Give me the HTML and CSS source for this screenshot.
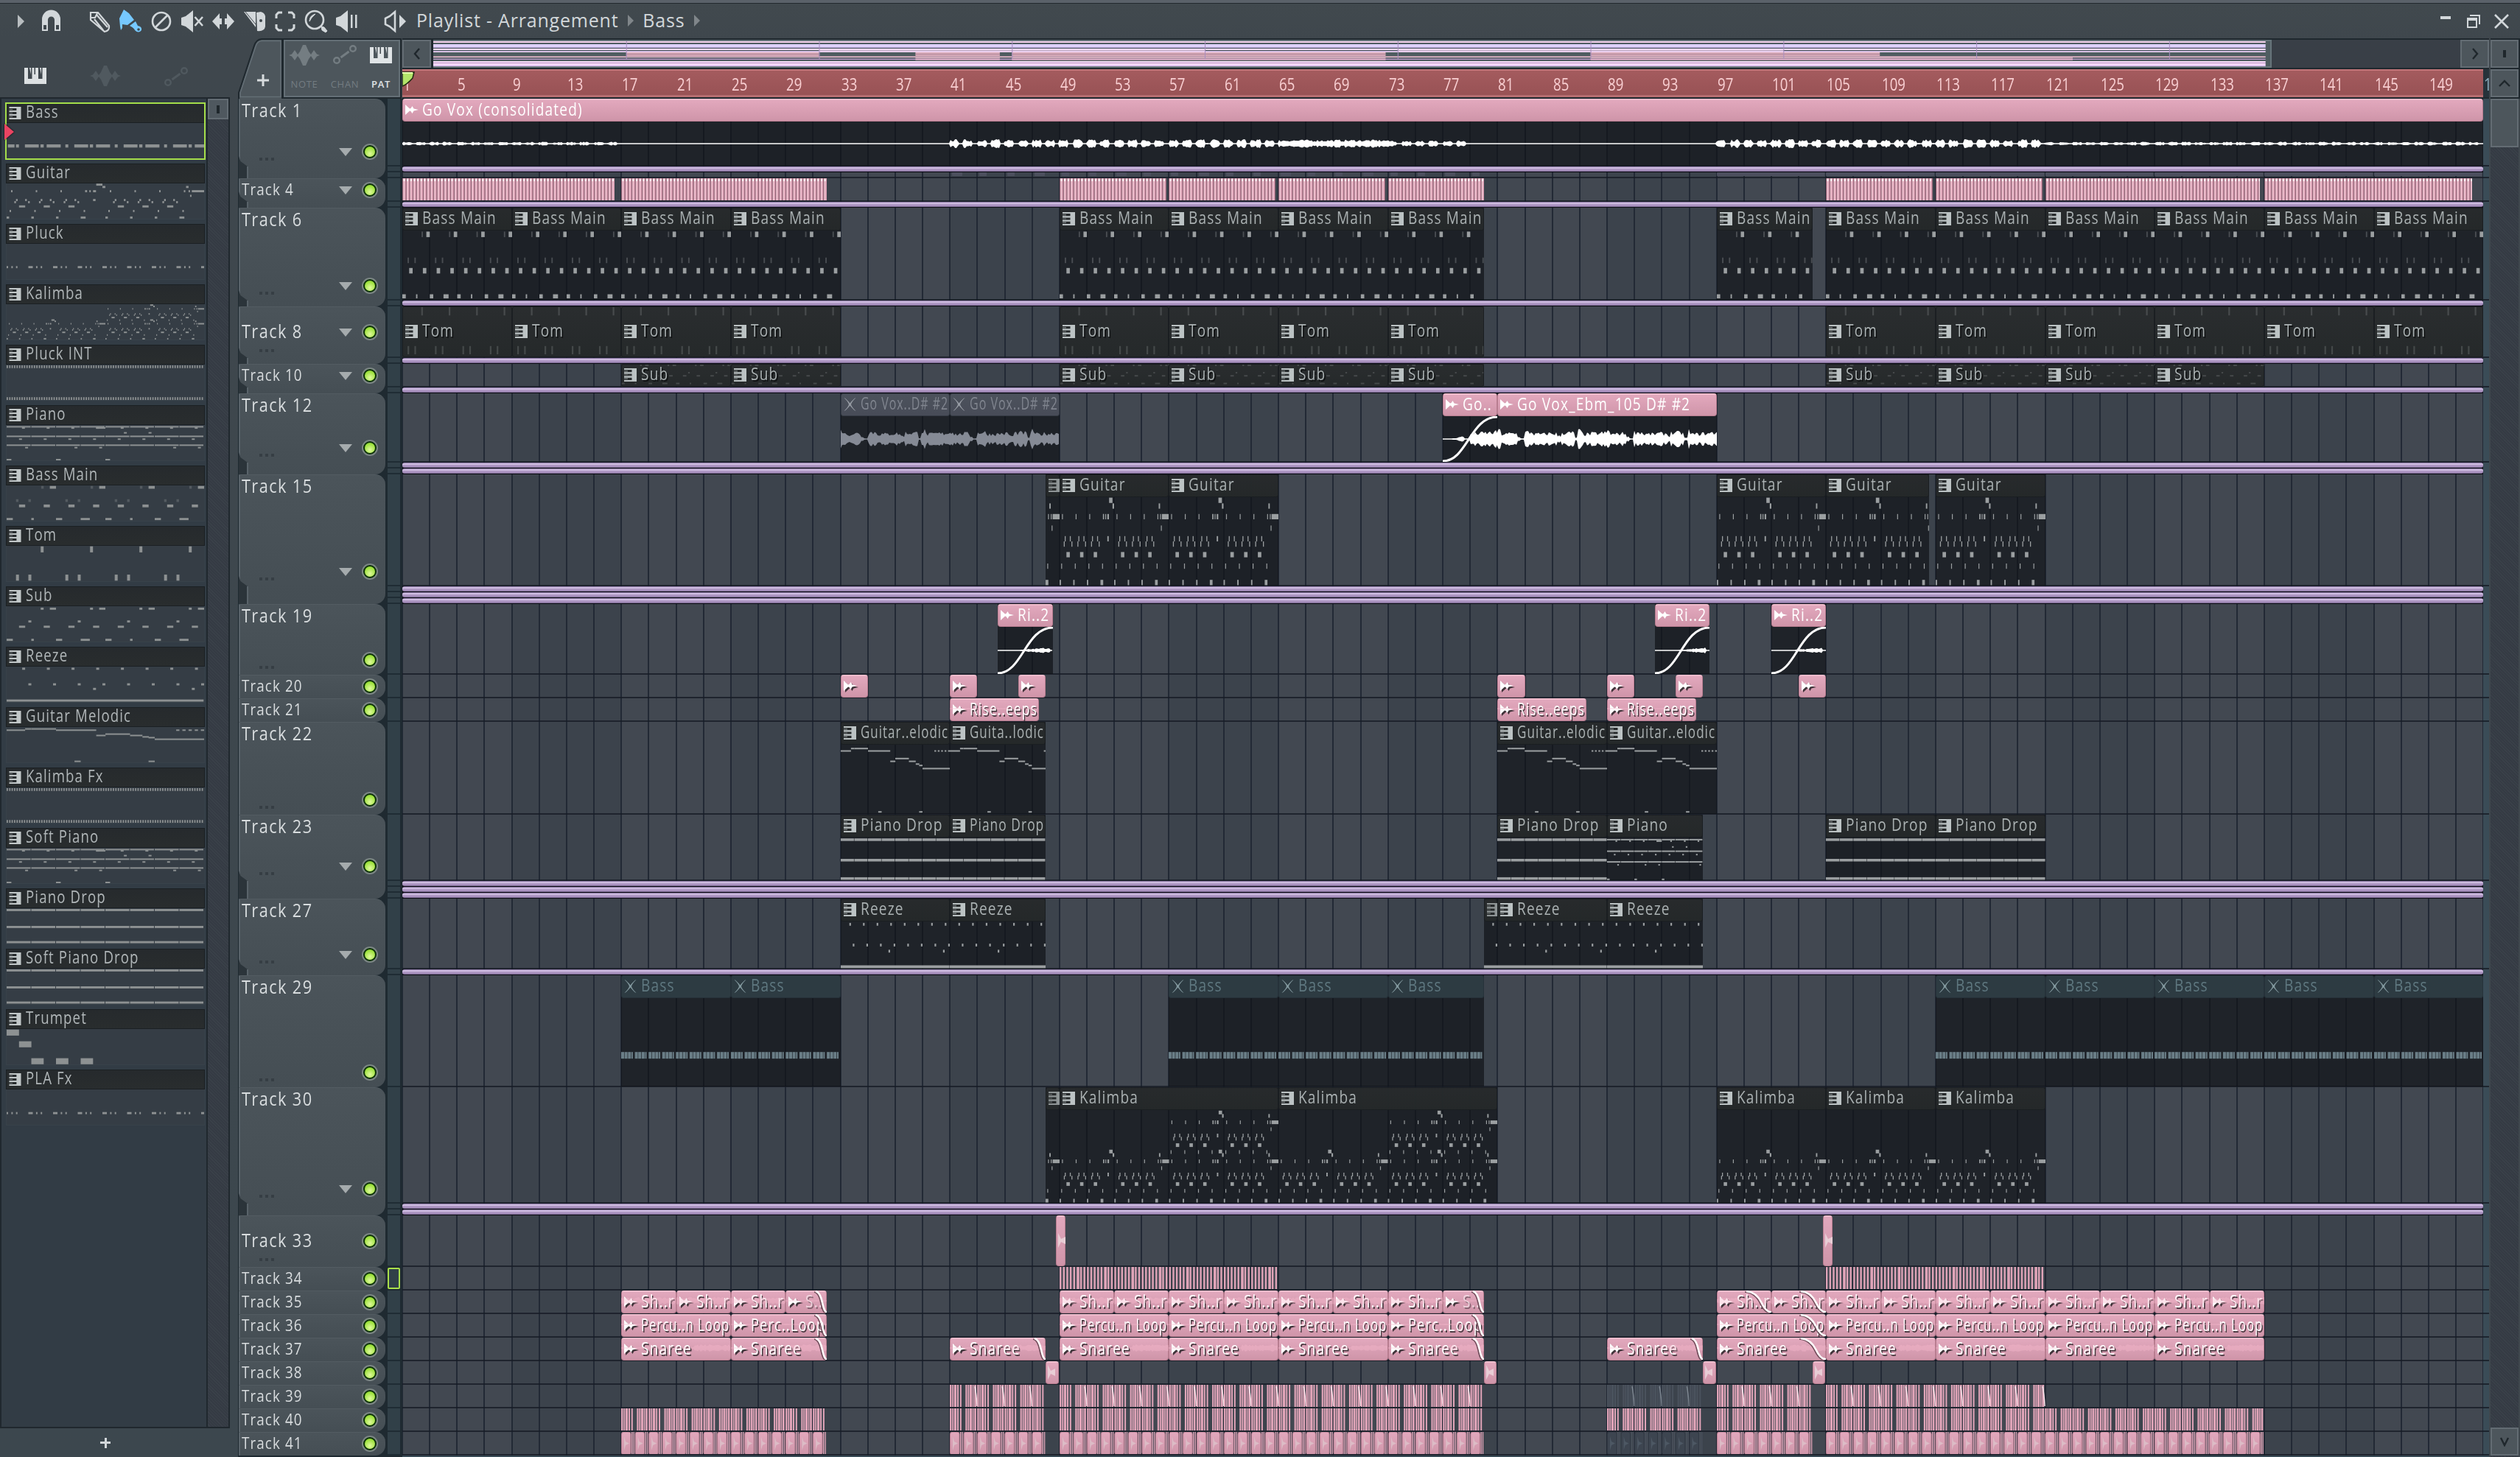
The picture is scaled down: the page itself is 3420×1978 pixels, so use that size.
FILE: index.html
```html
<!DOCTYPE html>
<html lang="en">
<head>
<meta charset="utf-8">
<title>Playlist - Arrangement</title>
<link rel="stylesheet" href="styles.css">
</head>
<body>
<svg class="defs" width="0" height="0">
  <symbol id="i-pattern" viewBox="0 0 17 18"><path d="M0 0H17V18H0V16H10.500V12.800H0V10.500H10.500V7.500H0V5.200H10.500V2H0z"/><path d="M0 3.600H5V4.300H0zM0 8.700H5V9.300H0zM0 13.800H5V14.400H0z"/></symbol>
  <symbol id="i-audio" viewBox="0 0 18 16"><path d="M0 1L6 6.500L7.500 6L9.500 3L11.500 6.500L18 8L11.500 9.500L9.500 13L7.500 10L6 9.500L0 15z"/></symbol>
  <symbol id="i-mute" viewBox="0 0 16 18"><path d="M0 0Q3 1 8 7.500Q13 1 16 0Q10 6 9.500 9Q10 12 16 18Q13 17 8 10.500Q3 17 0 18Q6 12 6.500 9Q6 6 0 0z"/></symbol>
  <symbol id="i-piano" viewBox="0 0 30 22"><path d="M0 0H5V15H10.500V0H19V15H24.500V0H30V22H0zM7 0H9V9zM21 0H23V9z"/><path d="M13.500 0H15V9H13.500z" fill="#3f474d"/></symbol>
  <symbol id="i-wave" viewBox="0 0 42 28"><path d="M0 14L4 12.500L8 7L12 13L15 9L19 0H23L27 9L30 13L34 7L38 12.500L42 14L38 15.500L34 21L30 15L27 19L23 28H19L15 19L12 15L8 21L4 15.500z"/></symbol>
  <symbol id="i-auto" viewBox="0 0 32 26"><g fill="none" stroke="currentColor" stroke-width="2.400"><circle cx="5" cy="21" r="3.800"/><circle cx="27" cy="5" r="3.800"/><path d="M10.500 17L21.500 9" stroke-width="3"/></g></symbol>
</svg>
<div class="window">
  <header class="toolbar">
    <svg class="tools" width="560" height="47" viewBox="0 5 560 47" fill="#d2d7da">
      <path d="M24 20L33 29L24 38z" fill="#b8bdc0"/>
      <path d="M57 42V26a12 12 0 0 1 25 0V42H74V27a4.500 4.500 0 0 0 -9 0V42zM59 34H63V40H59zM76 34H80V40H76z" fill-rule="evenodd"/>
      <g fill="none" stroke="#d2d7da" stroke-width="2.200"><path d="M123 17L133 17L148 35Q149 42 142 43L123 27zM128 26L140 41M131 20L146 37M123 24L129 24L132 18"/></g>
      <path d="M162 25L168 13L175 18L182 27L173 34L166 33V38L164 41L163 36zM176 35L184 29L187 35Q193 36 192 41Q188 46 183 41Q182 38 176 35z" fill="#76c8ff"/><circle cx="188" cy="40" r="1.800" fill="#3f474d"/>
      <g fill="none" stroke="#d2d7da" stroke-width="2.600"><circle cx="219" cy="29" r="12"/><path d="M211 37L227 21"/></g>
      <path d="M246 24L252 22L262 14V44L252 36L246 34z"/><path d="M264.500 23L275 35M275 23L264.500 35" stroke="#d2d7da" stroke-width="2.600"/>
      <path d="M288 29L298 18V25H301V33H298V40zM318 29L308 18V25H305V33H308V40z"/>
      <path d="M331 16L347 37V16zM348 17L354 16Q361 18 360 25V36Q359 43 349 42z"/><path d="M333 16L347 33" stroke="#3f474d"/><circle cx="354" cy="28" r="2" fill="#3f474d"/>
      <path d="M375 25V20L378 17H383M391 17H396L399 20V25M399 33V38L396 41H391M383 41H378L375 38V33" fill="none" stroke="#d2d7da" stroke-width="3"/>
      <circle cx="427" cy="27" r="12" fill="none" stroke="#d2d7da" stroke-width="2.600"/><path d="M420 29Q420 21 428 19Q422 24 420 29M436 36L440 37L444 42L442 44L437 41z" stroke="#d2d7da" stroke-width="1"/>
      <path d="M456 24L462 22L472 14V44L462 36L456 34zM476 20H478.500V38H476zM482 20H484.500V38H482z"/>
      <path d="M523 25L529 22L536 16V42L529 36L523 33z" fill="none" stroke="#d2d7da" stroke-width="2.600"/><path d="M542 20L551 29L542 38z"/>
    </svg>
    <nav class="crumbs"><span>Playlist - Arrangement</span><i></i><span>Bass</span><i></i></nav>
    <svg class="winbtns" width="100" height="24" viewBox="0 0 100 24" fill="#d2d7da"><path d="M2 4H16V8H2z"/><path d="M39 7H51V19H39z" fill="none" stroke="#d2d7da" stroke-width="2"/><path d="M38 6H52V10H38zM42 2H56V15H54V4H42z"/><path d="M76 2L94 20M94 2L76 20" stroke="#d2d7da" stroke-width="2.600"/></svg>
  </header>
  <div class="main">
    <aside class="picker">
      <div class="picker-tabs">
        <svg class="on" width="30" height="22"><use href="#i-piano"/></svg>
        <svg width="42" height="28"><use href="#i-wave"/></svg>
        <svg width="32" height="26"><use href="#i-auto"/></svg>
      </div>
      <div class="picker-body">
        <div class="picker-list" id="picker"></div>
        <div class="picker-scroll"><div class="knob"></div></div>
      </div>
      <button class="picker-add" aria-label="Add pattern"><b></b></button>
    </aside>
    <section class="playlist">
      <div class="corner">
        <svg width="61" height="82" viewBox="0 0 61 82"><path d="M1 82V74L22 10Q25 2 32 2H60V82z" fill="#4d565c"/><path d="M1 82V74L22 10Q25 1.500 32 1H60V82" fill="none" stroke="#1f282e" stroke-width="2"/><path d="M3 79.500V74L24 11Q26 4 32 3.500H58V79.500z" fill="none" stroke="#646f76" stroke-width="1.500"/><path d="M32.500 49H35.500V55.500H42V58.500H35.500V65H32.500V58.500H26V55.500H32.500z" fill="#d8dcde"/></svg>
        <div class="modes">
          <div><svg width="42" height="28"><use href="#i-wave"/></svg><span>NOTE</span></div>
          <div><svg width="32" height="26"><use href="#i-auto"/></svg><span>CHAN</span></div>
          <div class="on"><svg width="30" height="22"><use href="#i-piano"/></svg><span>PAT</span></div>
        </div>
      </div>
      <div class="top">
        <div class="mapbar">
          <div class="btn"><svg width="12" height="18"><path d="M9 2L3 9L9 16" fill="none" stroke="#1f272c" stroke-width="2.400"/></svg></div>
          <div class="map"><svg id="map" width="2495" height="38"></svg></div>
          <div class="btn"><svg width="12" height="18"><path d="M3 2L9 9L3 16" fill="none" stroke="#1f272c" stroke-width="2.400"/></svg></div>
        </div>
        <div class="ruler" id="ruler"></div>
      </div>
      <div class="side-top"><div class="btn"><em></em></div><div class="btn"><svg width="18" height="12"><path d="M2 10L9 3L16 10" fill="none" stroke="#1f272c" stroke-width="2.400"/></svg></div></div>
      <div class="heads" id="heads"></div>
      <div class="grid" id="grid"></div>
      <div class="vscroll"><div class="thumb"></div><div class="btn"><svg width="18" height="14"><path d="M4 2L9 12L14 2" fill="none" stroke="#1f272c" stroke-width="2.400"/></svg></div></div>
    </section>
  </div>
</div>
<script src="playlist.js"></script>
</body>
</html>
```
FILE: styles.css
```css
* { box-sizing: border-box; }
body { margin: 0; background: #3f474d; font-family: "Liberation Sans Narrow", "Open Sans", sans-serif; color: #d2d7da; overflow: hidden; }
.defs { position: absolute; }
svg { display: block; flex: none; }
button { border: 0; padding: 0; font: inherit; }
.window { width: 3420px; height: 1978px; display: flex; flex-direction: column; border-top: 4px solid #5a6169; background: #3f474d; }
.toolbar { height: 48px; display: flex; align-items: center; border-top: 1px solid #22292e; flex: none; background: linear-gradient(#41494e, #3f474d); padding-right: 10px; }
.crumbs { display: flex; align-items: center; font-size: 25px; letter-spacing: .8px; margin-left: 5px; padding-bottom: 4px; gap: 11px; flex: 1; white-space: nowrap; }
.crumbs i { width: 0; height: 0; border: 8px solid transparent; border-left: 8px solid #80868a; border-right: 0; margin: 3px 1px 0 2px; }
.winbtns { margin-top: 3px; }
.main { flex: 1; display: flex; min-height: 0; }

/* pattern picker */
.picker { width: 323px; display: flex; flex-direction: column; background: linear-gradient(#3f474d, #3c474e); }
.picker-tabs { height: 80px; display: flex; align-items: flex-end; color: #50595f; fill: #50595f; padding: 0 0 15px 33px; gap: 59px; }
.picker-tabs .on { fill: #dce0e2; margin-bottom: 3px; }
.picker-body { flex: 1; display: flex; margin: 0 11px 0 0; border: 2px solid #20282e; background: #323c45; }
.picker-list { width: 278px; display: flex; flex-direction: column; gap: 6px; padding: 6px 0 0 6px; }
.picker-scroll { flex: 1; border-left: 2px solid #20282e; background: repeating-linear-gradient(45deg, #353b44 0 2px, #3a4149 2px 3px); }
.knob { height: 28px; border: 2px solid #636c73; background: #4f585f; padding: 7px 0 0 10px; }
.knob::after { content: ""; display: block; width: 4px; height: 11px; background: #1f272c; }
.item { width: 270px; height: 76px; position: relative; border: 1px solid #38424a; background: #353d45; }
.item h3 { margin: -1px -1px 0; height: 27px; background: linear-gradient(#262a2d, #292d2e); border: 1px solid #1b2023; display: flex; align-items: center; gap: 6px; padding-left: 3px; font-weight: 500; font-size: 23px; line-height: 23px; letter-spacing: 1.400px; color: #b0b6b8; white-space: nowrap; }
.item h3 svg { fill: #c2c8c9; width: 17px; height: 17px; }
.item h3 span { transform: scaleX(.81); transform-origin: left; margin-bottom: 4px; }
.item.sel { outline: 2px solid #a4dd4a; outline-offset: -1px; }
.item.sel::after { content: ""; position: absolute; left: -3px; top: 27px; border: 11px solid transparent; border-left: 13px solid #ea4462; border-right: 0; filter: drop-shadow(0 0 1px #000); }
.picker-add { height: 39px; background: none; display: flex; justify-content: center; align-items: center; padding-right: 37px; }
.picker-add b { width: 14px; height: 14px; background: linear-gradient(#d2d7da, #d2d7da) center/100% 3px no-repeat, linear-gradient(#d2d7da, #d2d7da) center/3px 100% no-repeat; }

/* arrangement */
.playlist { flex: 1; display: grid; grid-template: 82px 1fr / 223px 2834px 40px; }
.corner { display: flex; padding-right: 3px; }
.modes { flex: 1; display: flex; justify-content: space-between; border: 2px solid #646f76; outline: 2px solid #1f282e; background: #4d565c; margin: 2px 0 2px 1px; padding: 4px 9px 8px 5px; color: #747d82; fill: #747d82; font-size: 13px; font-weight: 500; letter-spacing: .7px; }
.modes div { display: flex; flex-direction: column; align-items: center; justify-content: space-between; line-height: 16px; }
.modes .on { fill: #e0e4e6; color: #e0e4e6; font-weight: 600; }
.modes svg { margin-top: 1px; }
.modes .on svg { margin-top: 4px; }
.top { display: flex; flex-direction: column; border-top: 2px solid #1f282e; background: #1f282e; width: 2832px; }
.mapbar { height: 38px; display: flex; }
.btn { width: 39px; height: 38px; border: 2px solid #636c73; background: #4d565c; display: flex; align-items: center; justify-content: center; flex: none; }
.btn em { width: 4px; height: 10px; background: #1f272c; }
.map { flex: 1; background: #393f47; margin: 0 0 0 3px; }
.ruler { height: 38px; margin-top: 2px; width: 2832px; position: relative; overflow: hidden; background: #26323a; }
.ruler-fill { height: 38px; width: 2824px; background: linear-gradient(#a45b5e, #985255); border-top: 2px solid #c27579; border-bottom: 3px solid #b56d70; }
.ruler span { position: absolute; top: 7px; font-size: 23px; font-weight: 500; line-height: 26px; letter-spacing: 0; color: #f9cfd2; transform: scaleX(.81); transform-origin: left; }
.ruler span.out { color: #8fb0c0; }
.ruler svg { position: absolute; left: 0; top: 3px; }
.side-top { display: flex; flex-direction: column; gap: 2px; padding-top: 2px; background: #1f282e; }
.side-top .btn, .vscroll .btn { width: 38px; }
.vscroll { display: flex; flex-direction: column; justify-content: space-between; width: 38px; padding-bottom: 2px; background: repeating-linear-gradient(45deg, #353b44 0 2px, #3a4149 2px 3px); }
.thumb { height: 66px; border: 2px solid #636c73; background: #4d565c; }
.heads { background: #1f2a31; padding-left: 1px; border-right: 3px solid #1f2a31; width: 223px; }
.head-row { display: flex; gap: 3px; }
.head { width: 199px; position: relative; border-left: 2px solid #59636a; border-top: 1px solid #535c62; border-radius: 0 14px 14px 0; background: linear-gradient(#4b545a, #454e54); padding-left: 2px; color: #d8dcde; white-space: nowrap; }
.head .name { display: flex; align-items: center; font-size: 25px; font-weight: 500; line-height: 26px; height: 27px; letter-spacing: 1.600px; transform: scaleX(.87); transform-origin: left; }
.head.mid .name { height: 63px; }
.head.small .name { font-size: 22px; line-height: 24px; height: 25px; letter-spacing: 1.300px; transform: scaleX(.855); }
.led { position: absolute; left: 165px; width: 22px; height: 22px; border-radius: 50%; border: 2px solid #7c8685; background: #0d3208; padding: 2px; }
.led::after { content: ""; display: block; width: 14px; height: 14px; border-radius: 50%; background: radial-gradient(circle at 50% 70%, #dffa9c, #9be03a 70%, #74bf23); }
.fold { position: absolute; left: 134px; border: 9px solid transparent; border-top: 11px solid #a5abad; border-bottom: 0; }
.dots { position: absolute; left: 26px; width: 20px; height: 4px; background: repeating-linear-gradient(90deg, #363e44 0 4px, transparent 4px 8px); }
.notch { position: absolute; left: -2px; bottom: 0; width: 13px; background: #2b343a; border-right: 2px solid #59636a; }
.notch::before { content: ""; position: absolute; left: 0; top: -14px; width: 12px; height: 14px; background: #2b343a; clip-path: polygon(0 0, 20% 50%, 100% 100%, 0 100%); }
.gutter { width: 17px; display: flex; flex-direction: column; }
.gutter i { display: block; background: #314048; border-bottom: 2px solid #1f2c34; }
.gutter .cell { border: 2px solid #a9e04a; border-radius: 2px; background: #314048; height: 29px; margin: 1px 0 2px; }

.grid { position: relative; width: 2832px; background: #3a4c57; overflow: hidden; }
.grid .bg { position: absolute; left: 0; top: 0; }
.lane { position: relative; width: 2832px; border-bottom: 2px solid rgba(23, 28, 38, .8); }
.lane.link, .lane.dim { height: 8px; }
.lane.link { background: #0c0c14; border: 0; width: 2824px; }
.lane.link::before { content: ""; display: block; height: 7px; border-radius: 3px; background: linear-gradient(#8d7aa5 0 1px, #cdbbdf 1px 3px, #b39cc8 3px, #a48cba 6px, #7b6a92 6px); }
.clip { position: absolute; top: 0; height: calc(100% + 1px); overflow: hidden; background: rgba(15, 17, 22, .68); }
.clip .bar { height: 31px; display: flex; align-items: center; padding: 0 0 2px 3px; gap: 6px; font-size: 23px; font-weight: 500; line-height: 24px; letter-spacing: 1.400px; white-space: nowrap; color: #aab1b2; background: linear-gradient(rgba(40, 43, 45, .96), rgba(37, 41, 42, .96)); border: 1px solid rgba(24, 28, 31, .8); border-radius: 3px; position: relative; z-index: 1; }
.clip .bar span { flex: none; transform: scaleX(.83); transform-origin: left; margin-bottom: 3px; }
.clip .bar span.ghost { opacity: .55; }
.clip .bar svg { fill: #bcc3c4; width: 17px; height: 18px; }
.clip .body { display: block; position: absolute; left: 0; top: 31px; }
.clip.lead .bar svg { opacity: .7; }
.clip.full { background: linear-gradient(#2a2d2f, #25292a); }
.clip.full .bar { height: 100%; background: none; text-shadow: 2px 2px 0 #101213; }
.clip.full .body { top: 0; opacity: .25; }
.clip.pink .bar { background: linear-gradient(#e2a8bd, #cf95a9); border: 1px solid #b87d90; border-top: 2px solid #efbccc; color: #fff; border-radius: 4px; }
.clip.pink .bar svg { fill: #fff; width: 18px; height: 18px; }
.clip.pink .bar svg + span { margin-left: -1px; }
.clip.pink.full { background: none; }
.clip.pink.full .bar { text-shadow: 2px 2px 0 #40343a; z-index: 0; }
.clip.pink.full .bar svg { filter: drop-shadow(2px 2px 0 #40343a); }
.clip.pink.full .body { opacity: 1; z-index: 2; }
.clip.muted .bar { background: linear-gradient(#4c525c, #484c58); color: #80858f; border-color: #343a44; }
.clip.muted .bar svg { fill: #989da5; }
.clip.teal .bar { background: #2d3b42; color: #5f7880; border-color: #26323a; }
.clip.teal .bar svg { fill: #83999f; }
.strip { position: absolute; top: 0; height: 30px; }
```
FILE: playlist.js
```js
const BAR = 18.58;
const X = b => Math.round((b - 1) * BAR);
const range = (n, f) => Array.from({ length: n }, (_, i) => f(i));
let seed = 7;
const rnd = () => (seed = (seed * 16807) % 2147483647) / 2147483647;

/* Note maps: [start bar, length, vertical position 0..1, height 0..1, opacity] over an 8-bar loop */
const bottomRow = y => range(2, k => [[0, .25, y], [1, .1, y], [2, .25, y], [3, .37, y]].map(n => [n[0] + 4 * k, n[1], n[2]])).flat();
const line = (y, h) => range(8, k => [k, .97, y, h]);
const guitar = range(8, k => {
  const out = [[k + .18, .06, .22], [k + .12, .06, .78], [k, k % 4 === 3 ? .2 : .1, .965]];
  if (k % 4 < 3) out.push([k + .5, .25, .65], [k + .38, .07, .47], [k + .31, .07, .53], [k + .75, .07, .47], [k + .87, .07, .53]);
  return out;
}).flat().concat([[3.2, .06, .22], [3.35, .06, .22], [3.5, .12, .22], [3.63, .25, .035], [3.88, .12, .1], [7.27, .1, .1], [7.37, .06, .22], [7.5, .5, .22], [7.43, .06, .35], [3.5, .1, .47]]);
const low = guitar.map(n => [n[0], n[1], .427 + n[2] * .569, .04]);
const high = guitar.filter(n => n[2] < .9).map(n => [n[0], n[1], .006 + n[2] * .572, .04]);
const shift = (a, d) => a.map(n => [n[0] + d, ...n.slice(1)]);
const pluck = y => [[0, .06, y], [.19, .06, y], [.38, .06, y]].concat(range(8, k => [[k + .88, .18, y], [k + 1.19, .06, y], [k + 1.38, .06, y]]).flat());
const piano = [...line(.05, .025), ...line(.32, .025), ...line(.57, .025),
  ...range(8, k => [[k + .62, .12, .085, .03], [k + .5, .12, .4, .03]]).flat(),
  [3.63, .37, .085, .03], [4.75, .12, .22, .03], [5.75, .12, .22, .03],
  ...[.75, 2.75, 3.75, 6.75, 7.75].map(b => [b, .12, .64, .03]), ...[0, 2, 4].map(b => [b, .19, .98, .03])];
const P = {
  bass: [[.05, .27, .65, .09], [.38, .12, .65, .09], ...range(4, k => [[.74, .56], [1.37, .13], [1.62, .57], [2.38, .12]].map(n => [n[0] + 2 * k, n[1], .65, .09])).flat()],
  guitar,
  pluck: pluck(.66),
  pla: pluck(.67),
  kalimba: [...low, ...shift(low, 8), ...shift(high, 8)],
  dots: range(80, k => [[k / 10, .055, .06, .08], [k / 10, .055, .96, .08]]).flat(),
  piano,
  drop: [...line(.05, .06), ...line(.53, .06), ...line(.96, .06)],
  bassmain: [...range(4, k => [[1.4, .1, .055, .08, .35], [1.75, .25, .055, .08, 1], [.38, .1, .43, .08, .35], [.88, .1, .43, .08, .35]].map(n => [n[0] + 2 * k, ...n.slice(1)])).flat(), ...range(8, k => [k + .5, .25, .58, .08]), ...bottomRow(.95)],
  tom: range(4, k => [[1.38, .12, .1, .17], [.38, .12, .9, .17], [.88, .12, .9, .17]].map(n => [n[0] + 2 * k, ...n.slice(1)])).flat(),
  sub: [...range(4, k => [[1.38, .12, .07], [1.75, .25, .07], [.88, .12, .43]].map(n => [n[0] + 2 * k, n[1], n[2]])).flat(), ...range(8, k => [k + .5, .25, .58]), ...bottomRow(.95)],
  reeze: [...range(8, k => [[k + .63, .12, .06], [k + .88, .12, .5]]).flat(), [3.5, .12, .63], [7.5, .12, .63], [0, 7.98, .96, .06]],
  melodic: [[0, .75, .09], [.75, .25, .055], [1, 1, .055], [2, 1.63, .09], [3.63, .38, .24], [4, 1, .2], [5, .5, .24], [5.5, .26, .28], [5.75, .25, .3], [6, 2, .345], ...range(5, k => [6.87 + k * .25, .13, .09]), [2.75, .25, .97], [5.75, .25, .97]].map(n => [...n, .02]),
  trumpet: [[0, .5, .1, .17], [.5, .5, .43, .17], [1, .5, .91, .17], [2, .5, .91, .17], [3, .5, .91, .17]]
};
function notes(p, bars, w, h, color, off = 0) {
  const u = w / bars;
  const r = P[p].filter(n => n[0] >= off - .01 && n[0] < off + bars - .02).map(n => {
    const hh = Math.max(2, (n[3] || .06) * h), y = Math.min(h - hh, Math.max(0, n[2] * h - hh / 2));
    return `<rect x="${((n[0] - off) * u).toFixed(1)}" y="${y.toFixed(1)}" width="${Math.max(1.2, n[1] * u).toFixed(1)}" height="${hh.toFixed(1)}"${n[4] ? ` opacity="${n[4]}"` : ''}/>`;
  }).join('');
  return `<svg class="body" width="${w}" height="${h}" fill="${color}">${r}</svg>`;
}
const icon = id => `<svg><use href="#i-${id}"/></svg>`;

/* Picker */
document.getElementById('picker').innerHTML = [
  ['Bass', 'bass'], ['Guitar', 'guitar'], ['Pluck', 'pluck'], ['Kalimba', 'kalimba', 16], ['Pluck INT', 'dots'], ['Piano', 'piano'], ['Bass Main', 'bassmain'], ['Tom', 'tom'], ['Sub', 'sub'], ['Reeze', 'reeze'], ['Guitar Melodic', 'melodic'], ['Kalimba Fx', 'dots'], ['Soft Piano', 'piano'], ['Piano Drop', 'drop'], ['Soft Piano Drop', 'drop'], ['Trumpet', 'trumpet'], ['PLA Fx', 'pla']
].map((p, i) => `<div class="item${i ? '' : ' sel'}"><h3>${icon('pattern')}<span>${p[0]}</span></h3>${notes(p[1], p[2] || 8, 268, 48, '#8d9192')}</div>`).join('');

/* Clips: [kind, start bar, end bar, label, extra] */
const seq = (kind, label, pairs) => pairs.map(([a, b, x]) => [kind, a, b, label, x]);
const A = [[49, 57], [57, 65], [65, 73], [73, 80]];
const B = [[105, 113], [113, 121], [121, 129], [129, 137]];
const C = [[137, 145], [145, 153]];
const I = [[1, 9], [9, 17], [17, 25], [25, 33]];
const hits = [[17, 32], [41, 48], [49, 80], [89, 96], [97, 104], [105, 137]];
const tracks = [
  ['Track 1', 92, 'pd', [['vox', 1, 153, 'Go Vox (consolidated)']]],
  ['Track 4', 32, 'p', seq('roll', '', [[1, 16.5], [17, 32], [49, 56.8], [57, 64.8], [65, 72.8], [73, 80], [105, 112.8], [113, 120.8], [121, 136.7], [137, 152.2]])],
  ['Track 6', 126, 'p', seq('bassmain', 'Bass Main', [...I, ...A, [97, 104], ...B, ...C])],
  ['Track 8', 70, 'p', seq('tom', 'Tom', [...I, ...A, ...B, ...C])],
  ['Track 10', 32, 'p', seq('sub', 'Sub', [[17, 25], [25, 33], ...A, ...B])],
  ['Track 12', 94, 'pp', [['voxm', 33, 41, 'Go Vox..D# #2'], ['voxm', 41, 49, 'Go Vox..D# #2'], ['voxf', 77, 81, 'Go..'], ['voxe', 81, 97, 'Go Vox_Ebm_105 D# #2']]],
  ['Track 15', 152, 'ppp', [['guitar', 48, 49, '', 7], ...seq('guitar', 'Guitar', [[49, 57], [57, 65], [97, 105], [105, 112.5], [113, 121]])]],
  ['Track 19', 96, '', seq('riser', 'Ri..2', [[44.5, 48.5], [92.5, 96.5], [101, 105]])],
  ['Track 20', 32, '', seq('pink', '', [[33, 35], [41, 43], [46, 48], [81, 83], [89, 91], [94, 96], [103, 105]])],
  ['Track 21', 32, '', seq('pink', 'Rise..eeps', [[41, 47.5], [81, 87.5], [89, 95.5]])],
  ['Track 22', 126, '', [['melodic', 33, 41, 'Guitar..elodic'], ['melodic', 41, 48, 'Guita..lodic'], ['melodic', 81, 89, 'Guitar..elodic'], ['melodic', 89, 97, 'Guitar..elodic']]],
  ['Track 23', 90, 'ppp', [...seq('drop', 'Piano Drop', [[33, 41], [41, 48], [81, 89], [105, 113], [113, 121]]), ['piano', 89, 96, 'Piano']]],
  ['Track 27', 96, 'p', [['reeze', 80, 81, '', 0], ...seq('reeze', 'Reeze', [[33, 41], [41, 48], [81, 89], [89, 96]])]],
  ['Track 29', 152, '', seq('bassm', 'Bass', [[17, 25], [25, 33], [57, 65], [65, 73], [73, 80], [113, 121], [121, 129], [129, 137], ...C])],
  ['Track 30', 158, 'pp', [['kalimba', 48, 49, '', 7], ...seq('kalimba', 'Kalimba', [[49, 65], [65, 81], [97, 105], [105, 113], [113, 121]])]],
  ['Track 33', 70, '', seq('sliver', '', [[48.75, 49.45], [104.75, 105.45]])],
  ['Track 34', 32, '', seq('hat', '', [[49, 65], [105, 121]])],
  ['Track 35', 32, '', [...seq('pink', 'Sh..r', [[17, 21], [21, 25], [25, 29]]), ['pink', 29, 32, 'S..', 15], ...range(7, k => ['pink', 49 + 4 * k, 53 + 4 * k, 'Sh..r']), ['pink', 77, 80, 'S..', 15], ...range(10, k => ['pink', 97 + 4 * k, 101 + 4 * k, 'Sh..r', k < 2 ? 34 : 0])]],
  ['Track 36', 32, '', [['pink', 17, 25, 'Percu..n Loop'], ['pink', 25, 32, 'Perc..Loop', 15], ...seq('pink', 'Percu..n Loop', [[49, 57], [57, 65], [65, 73], [97, 105, 34], ...B]), ['pink', 73, 80, 'Perc..Loop', 15]]],
  ['Track 37', 32, '', seq('pink', 'Snaree', [[17, 25], [25, 32, 15], [41, 48, 15], [49, 57], [57, 65], [65, 73], [73, 80, 15], [89, 96, 15], [97, 105, 34], ...B])],
  ['Track 38', 32, '', seq('sliver', '', [[48, 48.95], [80, 80.95], [96, 96.95], [104, 104.95]])],
  ['Track 39', 32, '', seq('clap', '', [[41, 48], [49, 80], [89, 96, 1], [97, 104], [105, 121]])],
  ['Track 40', 32, '', seq('perc', '', hits)],
  ['Track 41', 32, '', seq('kick', '', hits.map(h => h[0] === 89 ? [89, 96, 1] : h))]
];

/* Mirrored waveform as one filled path */
function wave(w, h, env) {
  let up = '', down = '', m = h / 2;
  for (let x = 0; x <= w; x += 2) {
    const a = Math.max(.8, env(x) * (.45 + .55 * rnd()));
    up += `L${x} ${(m - a).toFixed(1)}`;
    down = `L${x} ${(m + a).toFixed(1)}` + down;
  }
  return `<path d="M0 ${m}${up}${down}z"/>`;
}
const svg = (w, h, inner, fill = '#fff') => `<svg class="body" width="${w}" height="${h}" fill="${fill}">${inner}</svg>`;
const curve = (w, h) => `<path d="M0 ${h - 1}C${w * .45} ${h - 1} ${w * .5} 1 ${w} 1" fill="none" stroke="#fff" stroke-width="3"/>`;
/* Loudness of the vocal phrase, repeating every eight bars: [until, level] */
const phrase = [[.03, 13], [.1, 8], [.18, 9], [.21, 4], [.25, 1], [.33, 11], [.45, 8], [.55, 9], [.58, 5], [.7, 10], [.74, 2], [.77, 13], [.85, 8], [.95, 9], [1, 10]];
const sung = (x, gain) => phrase.find(s => x / (8 * BAR) % 1 <= s[0])[1] * gain;
function strip(kind, w, a, muted) {
  let r = '';
  const step = BAR / 4, c = muted ? '#4a525d' : '#e0a4b8';
  const rect = (x, ww, f = c, y = 0, h = 31, e = '') => { if (x + ww <= w + 1) r += `<rect x="${x.toFixed(1)}" y="${y}" width="${ww}" height="${h}" fill="${f}" ${e}/>`; };
  if (kind === 'roll') {
    rect(0, w, '#dba0b4');
    for (let x = 0; x < w; x += step) { rect(x, 1.3, '#8f6475'); rect(x + 1.6, 1.4, '#f3c8d5'); rect(x + 1.6, 1.8, '#fff', 1, 3); }
  } else if (kind === 'hat') {
    for (let x = 0, i = 0; x < w; x += step, i++) rect(x, i % 8 === 5 ? 3.6 : 2.4);
  } else if (kind === 'kick') {
    for (let x = 0; x < w - 5; x += BAR) {
      rect(x + .5, 12.5, muted ? '#3d4550' : 'url(#pk)', 0, 31, `rx="3" stroke="${muted ? '#323944' : '#b87d90'}"`);
      r += `<path d="M${x + 4} 6L${x + 6} 13L${x + 11} 15.500L${x + 6} 18L${x + 4} 25z" fill="${muted ? '#4d5864' : '#dcbcc6'}"/>`;
      rect(x + 14, 1.5); rect(x + 16.5, 1.3);
    }
  } else {
    const p = [[0, 2.4], [3.2, 1.7], [5.7, 3.4], [10, 2], [13.8, 2], [21.3, 2.2], [24.3, 2], [27, 3], [30.7, 1.7], [33.2, 2.7]];
    for (let x = 0; x < w; x += 2 * BAR) {
      p.forEach(q => rect(x + q[0], q[1]));
      if (kind === 'clap') r += `<path d="M${x + 34} 2Q${x + 36} 12 ${x + 37} 29" fill="none" stroke="${muted ? '#7d8690' : '#fbe6ec'}" stroke-width="1.500"/>`;
    }
  }
  return `<svg class="strip" style="left:${a}px" width="${w}" height="31"><defs><linearGradient id="pk" x2="0" y2="1"><stop stop-color="#e2a8bd"/><stop offset="1" stop-color="#cf95a9"/></linearGradient></defs>${r}</svg>`;
}
function clip([kind, s, e, label, x], h) {
  const a = X(s), w = X(e) - a, bh = h - 32;
  if (['roll', 'hat', 'kick', 'perc', 'clap'].includes(kind)) return strip(kind, w, a, x);
  const box = (cls, ic, body) => `<div class="clip ${cls}" style="left:${a}px;width:${w}px"><div class="bar">${icon(ic)}${label ? `<span${label === 'S..' ? ' class="ghost"' : ''}>${label}</span>` : ''}</div>${body}</div>`;
  const loud = b => b < 17 ? 2.5 : b < 41 ? 0 : b < 65 ? 6 : b < 73 ? 5.5 : b < 79 ? 4.5 : b < 97 ? 0 : b < 121 ? 6 : 2.5;
  switch (kind) {
    case 'vox': return box('pink', 'audio', svg(w, bh, wave(w, bh, p => { const b = 1 + p / BAR; return loud(b) * (b % 1 < .65 || (b > 65 && b < 73) ? 1 : .15); })));
    case 'voxm': return box('muted', 'mute', svg(w, bh, wave(w, bh, p => sung(p, 1.1)), '#858a95'));
    case 'voxe': return box('pink', 'audio', svg(w, bh, wave(w, bh, p => sung(p, 1.1))));
    case 'voxf': return box('pink', 'audio', svg(w, bh, wave(w, bh, p => p < 14 ? 0 : p < 30 ? (p - 10) / 4 : p < 38 ? 1 : 6 + p / 12) + curve(w, bh)));
    case 'riser': return box('pink', 'audio', svg(w, bh, wave(w, bh, p => p > w - 5 ? 0 : p < 20 ? 0 : (p - 20) / 11) + curve(w, bh)));
    case 'sliver': return `<div class="clip pink full" style="left:${a}px;width:${w}px"><div class="bar"></div>${svg(w, h - 2, `<path d="M3 ${h / 2 - 11}L7 ${h / 2 - 3}L13 ${h / 2 - 6}V${h / 2 + 4}L7 ${h / 2 + 1}L3 ${h / 2 + 9}z" fill="#e8cdd5"/>`)}</div>`;
    case 'pink': {
      const d = `M${w - x} 1Q${w - x * .6} 2 ${w - x * .4} 16T${w} 29`;
      const fade = x ? `<path d="${d}" fill="none" stroke="#6b4c58" stroke-width="1.500" transform="translate(-2 1)"/><path d="${d}" fill="none" stroke="#fff" stroke-width="2.400"/>` : '';
      const hum = label ? `<g opacity=".4" transform="translate(0 -1)" fill="#f7b9cc">${wave(w, 30, p => p > w - 50 && label === 'Snaree' || label[1] === 'h' ? 5 : 1)}</g>` : '';
      return box('pink full', 'audio', svg(w, 30, hum + fade));
    }
    case 'bassm': return box('teal', 'mute', svg(w, bh, range(Math.round((e - s) * 4), k => `<rect x="${(k * BAR / 4).toFixed(1)}" y="${bh * .61}" width="${k % 4 === 3 ? 2 : 4}" height="9"/>`).join(''), '#6a7e87'));
    case 'tom': case 'sub': return box('full', 'pattern', notes(kind, e - s, w, h - 4, '#a0a5a5'));
    default: return box(label ? '' : 'lead', 'pattern', notes(kind, e - s, w, bh, '#9b9fa1', x || 0));
  }
}

/* Ruler */
document.getElementById('ruler').innerHTML = '<div class="ruler-fill"></div>' +
  range(39, k => `<span class="${k === 38 ? 'out' : ''}" style="left:${X(1 + 4 * k) + 1}px">${1 + 4 * k}</span>`).join('') +
  '<svg width="18" height="22"><path d="M0 1H16L14 9Q6 18 0 20z" fill="#b3e46a" stroke="#1e2a10" stroke-width="1.500"/><path d="M0 2H14" stroke="#e6ffb0" stroke-width="2"/></svg>';

/* Track headers and lanes */
const total = 1842;
let heads = '', lanes = '';
tracks.forEach(([name, h, subs, clips]) => {
  const size = h <= 32 ? ' small' : h <= 70 ? ' mid' : '';
  const full = h + subs.length * 8, cy = h <= 70 ? h / 2 - 1 : h - 21;
  heads += `<div class="head-row"><div class="head${size}" style="height:${full}px"><div class="name">${name}</div>` +
    (size === ' small' ? '' : `<i class="dots" style="top:${h - 13}px"></i>`) +
    (subs ? `<i class="fold" style="top:${cy - 5}px"></i><i class="notch" style="height:${subs.length * 8}px"></i>` : '') +
    `<i class="led" style="top:${cy - 11}px"></i></div><div class="gutter">` +
    (name === 'Track 34' ? '<i class="cell"></i>' : `<i style="height:${h}px"></i>`) + subs.replace(/./g, '<i style="height:8px"></i>') + '</div></div>';
  lanes += `<div class="lane" style="height:${h}px">${clips.map(c => clip(c, h)).join('')}</div>`;
  for (const s of subs) {
    if (s === 'p') lanes += '<div class="lane link"></div>';
    else lanes += `<div class="lane dim"><svg width="2824" height="6" fill="#4c4f5e">${range(20, k => `<rect x="${X(41 + k * 2) + 3}" y="0" width="${k % 3 ? 10 : 14}" height="5" rx="1"/>`).join('')}${[97, 105, 113, 121, 129, 137, 145].map(b => `<rect x="${X(b)}" width="${X(b + 8) - X(b) - 2}" height="5" rx="1"/>`).join('')}</svg></div>`;
  }
});
document.getElementById('heads').innerHTML = heads;
const cols = range(19, k => `<rect x="${X(1 + 8 * k)}" width="${X(9 + 8 * k) - X(1 + 8 * k)}" height="${total}" fill="${k % 2 ? '#3c434c' : '#424851'}"/>`).join('');
const rules = range(77, k => `<rect x="${X(1 + 2 * k) - 1}" width="2" height="${total}" fill="#222935"/>`).join('');
document.getElementById('grid').innerHTML = `<svg class="bg" width="2824" height="${total}">${cols}${rules}</svg>${lanes}`;

/* Condense labels that would run past the end of their clip */
document.querySelectorAll('.clip').forEach(c => {
  const t = c.querySelector('span');
  if (!t) return;
  const room = c.clientWidth - t.offsetLeft - 3;
  t.style.transform = `scaleX(${Math.min(.83, room / t.offsetWidth).toFixed(3)})`;
});

/* Overview strip */
const bands = [[2, 2, '#f7d3ee'], [6, 4, '#ddd0fa'], [10, 1, '#b7a5d6'], [12, 2, '#f3dcf8'], [15, 1, '#b99fce'], [16, 1, '#f6dff9'], [22, 1, '#a88b9c'], [23, 1, '#f3c5d6'], [25, 1, '#7c7189'], [26, 1, '#b79ac9'], [29, 2, '#f6dcf8'], [31, 1, '#b48fc0'], [32, 2, '#fbdffb'], [34, 2, '#e3c6f4']];
const M = 16.36, block = (a, b, y, h, f, o) => `<rect x="${((a - 1) * M).toFixed(1)}" y="${y}" width="${((b - a) * M).toFixed(1)}" height="${h}" fill="${f}" opacity="${o}"/>`;
document.getElementById('map').innerHTML = '<rect width="2495" height="38" fill="#66747a"/><rect y="2" width="2493" height="34" fill="#4f5d61"/>' +
  bands.map(b => block(1, 153, b[0], b[1], b[2], 1)).join('') +
  [[17, 33], [41, 48], [49, 80], [97, 121]].map(r => block(r[0], r[1], 17, 5, '#f2b9cb', .85) + block(r[0], r[1], 19, 1, '#8d6f7d', .6)).join('') +
  [[33, 49], [49, 65], [81, 97], [97, 113]].map(r => block(r[0], r[1], 13, 4, '#f3d6f3', .7)).join('') +
  [[41, 48], [49, 80], [97, 137]].map(r => block(r[0], r[1], 24, 4, '#f2b9cb', .6)).join('') +
  [17, 33, 49, 65, 81, 97, 113, 129, 145].map(b => `<rect x="${(b - 1) * M}" y="2" width="1" height="24" fill="#a98fc0"/>`).join('');
```
